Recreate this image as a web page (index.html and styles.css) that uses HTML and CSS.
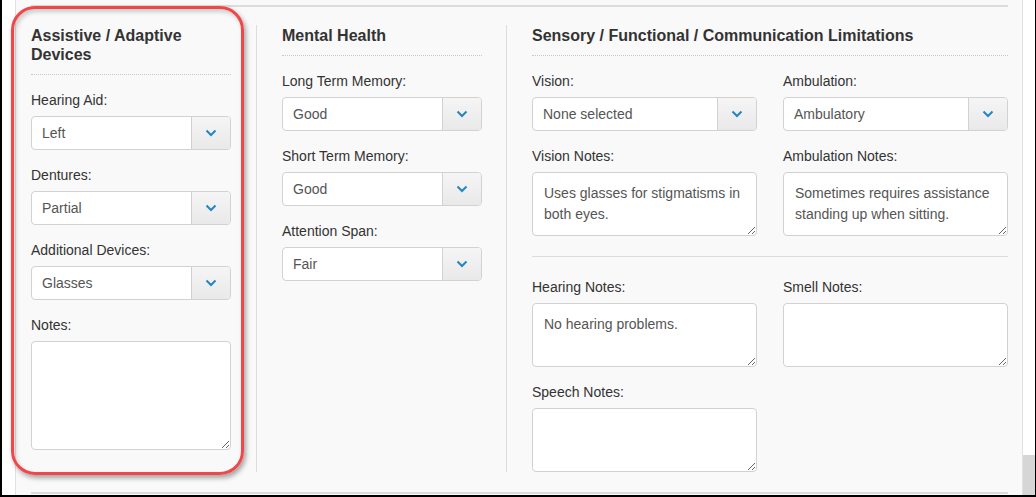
FILE: index.html
```html
<!DOCTYPE html>
<html>
<head>
<meta charset="utf-8">
<link rel="stylesheet" href="styles.css">
</head>
<body>
<div class="frame">
  <div class="gutter"></div>
  <div class="panel">
    <div class="rule top-rule"></div>
    <div class="columns">
      <section class="col col-1">
        <h3 class="heading">Assistive / Adaptive Devices</h3>
        <div class="field">
          <label class="label">Hearing Aid:</label>
          <div class="select"><span class="value">Left</span><span class="caret"><svg width="12" height="8" viewBox="0 0 12 8"><path d="M1.5 1.5 L6 6 L10.5 1.5" fill="none" stroke="#2386c3" stroke-width="2"/></svg></span></div>
        </div>
        <div class="field">
          <label class="label">Dentures:</label>
          <div class="select"><span class="value">Partial</span><span class="caret"><svg width="12" height="8" viewBox="0 0 12 8"><path d="M1.5 1.5 L6 6 L10.5 1.5" fill="none" stroke="#2386c3" stroke-width="2"/></svg></span></div>
        </div>
        <div class="field">
          <label class="label">Additional Devices:</label>
          <div class="select"><span class="value">Glasses</span><span class="caret"><svg width="12" height="8" viewBox="0 0 12 8"><path d="M1.5 1.5 L6 6 L10.5 1.5" fill="none" stroke="#2386c3" stroke-width="2"/></svg></span></div>
        </div>
        <div class="field">
          <label class="label">Notes:</label>
          <textarea class="textarea tall"></textarea>
        </div>
      </section>
      <section class="col col-2">
        <h3 class="heading">Mental Health</h3>
        <div class="field">
          <label class="label">Long Term Memory:</label>
          <div class="select"><span class="value">Good</span><span class="caret"><svg width="12" height="8" viewBox="0 0 12 8"><path d="M1.5 1.5 L6 6 L10.5 1.5" fill="none" stroke="#2386c3" stroke-width="2"/></svg></span></div>
        </div>
        <div class="field">
          <label class="label">Short Term Memory:</label>
          <div class="select"><span class="value">Good</span><span class="caret"><svg width="12" height="8" viewBox="0 0 12 8"><path d="M1.5 1.5 L6 6 L10.5 1.5" fill="none" stroke="#2386c3" stroke-width="2"/></svg></span></div>
        </div>
        <div class="field">
          <label class="label">Attention Span:</label>
          <div class="select"><span class="value">Fair</span><span class="caret"><svg width="12" height="8" viewBox="0 0 12 8"><path d="M1.5 1.5 L6 6 L10.5 1.5" fill="none" stroke="#2386c3" stroke-width="2"/></svg></span></div>
        </div>
      </section>
      <section class="col col-3">
        <h3 class="heading">Sensory / Functional / Communication Limitations</h3>
        <div class="grid">
          <div class="field">
            <label class="label">Vision:</label>
            <div class="select"><span class="value">None selected</span><span class="caret"><svg width="12" height="8" viewBox="0 0 12 8"><path d="M1.5 1.5 L6 6 L10.5 1.5" fill="none" stroke="#2386c3" stroke-width="2"/></svg></span></div>
          </div>
          <div class="field">
            <label class="label">Ambulation:</label>
            <div class="select"><span class="value">Ambulatory</span><span class="caret"><svg width="12" height="8" viewBox="0 0 12 8"><path d="M1.5 1.5 L6 6 L10.5 1.5" fill="none" stroke="#2386c3" stroke-width="2"/></svg></span></div>
          </div>
          <div class="field">
            <label class="label">Vision Notes:</label>
            <textarea class="textarea">Uses glasses for stigmatisms in both eyes.</textarea>
          </div>
          <div class="field">
            <label class="label">Ambulation Notes:</label>
            <textarea class="textarea">Sometimes requires assistance standing up when sitting.</textarea>
          </div>
        </div>
        <div class="rule mid-rule"></div>
        <div class="grid">
          <div class="field">
            <label class="label">Hearing Notes:</label>
            <textarea class="textarea">No hearing problems.</textarea>
          </div>
          <div class="field">
            <label class="label">Smell Notes:</label>
            <textarea class="textarea"></textarea>
          </div>
          <div class="field">
            <label class="label">Speech Notes:</label>
            <textarea class="textarea"></textarea>
          </div>
        </div>
      </section>
    </div>
    <div class="rule bottom-rule"></div>
  </div>
  <div class="scrollbar"><div class="thumb"></div></div>
  <div class="highlight"></div>
</div>
</body>
</html>
```

FILE: styles.css
```css
* { box-sizing: border-box; }
html, body { margin: 0; padding: 0; background: #fff; }
body {
  font-family: "Liberation Sans", Arial, sans-serif;
  font-size: 14px;
  color: #333;
}
.frame {
  position: relative;
  width: 1036px;
  height: 497px;
  display: flex;
  border-left: 2px solid #000;
  border-right: 1px solid #000;
  border-bottom: 2px solid #000;
  overflow: hidden;
}
.gutter { width: 13px; flex: none; background: #fff; }
.panel {
  width: 1008px;
  flex: none;
  background: #f9f9f9;
  border-left: 1px solid #e1e1e1;
  border-right: 1px solid #e1e1e1;
  padding: 5px 14px 0 15px;
}
.rule { height: 2px; background: #dcdcdc; }
.top-rule { margin-bottom: 18px; }
.bottom-rule { margin-top: 20px; }
.columns { display: flex; align-items: stretch; }
.col { flex: none; }
.col-1 { width: 200px; margin-right: 25px; }
.col-2 { width: 250px; border-left: 1px solid #ddd; padding-left: 25px; padding-right: 24px; }
.col-3 { flex: 1; min-width: 0; border-left: 1px solid #ddd; padding-left: 25px; }
.heading {
  margin: 0 0 15px;
  font-size: 16px;
  line-height: 19px;
  font-weight: bold;
  color: #333;
  padding-top: 1px;
  padding-bottom: 10px;
  border-bottom: 1px dotted #c8c8c8;
}
.field { margin-bottom: 15px; }
.label { display: block; line-height: 20px; margin-bottom: 6px; color: #333; }
.select {
  display: flex;
  height: 34px;
  background: #fff;
  border: 1px solid #d2d2d2;
  border-radius: 4px;
  overflow: hidden;
}
.value { flex: 1; padding-left: 10px; line-height: 32px; color: #555; }
.caret {
  width: 39px;
  display: flex;
  align-items: center;
  justify-content: center;
  border-left: 1px solid #d2d2d2;
  background: linear-gradient(#f5f5f5, #e9e9e9);
}
.textarea {
  display: block;
  width: 100%;
  height: 64px;
  margin: 0;
  padding: 10px 11px 6px;
  font-family: "Liberation Sans", Arial, sans-serif;
  font-size: 14px;
  line-height: 21px;
  color: #555;
  background: #fff;
  border: 1px solid #d2d2d2;
  border-radius: 4px;
  overflow: hidden;
}
.textarea.tall { height: 109px; }
.grid {
  display: grid;
  grid-template-columns: minmax(0, 1fr) minmax(0, 1fr);
  column-gap: 26px;
}
.mid-rule { height: 1px; margin: 5px 0 20px; background: #dcdcdc; }
.col-3 .grid:last-child .field:last-child { margin-bottom: 0; }
.col-1 .field:last-child { margin-bottom: 0; }
.scrollbar {
  width: 12px;
  flex: none;
  background: #fff;
  display: flex;
  flex-direction: column;
  justify-content: flex-end;
}
.thumb { height: 40px; background: #d6d6d6; }
.highlight {
  position: absolute;
  left: 9px;
  top: 6px;
  width: 233px;
  height: 469px;
  border: 3px solid #f0474a;
  border-radius: 24px;
  box-shadow: 2px 3px 5px rgba(0,0,0,0.35), inset 2px 3px 4px rgba(0,0,0,0.18);
  pointer-events: none;
}
```
